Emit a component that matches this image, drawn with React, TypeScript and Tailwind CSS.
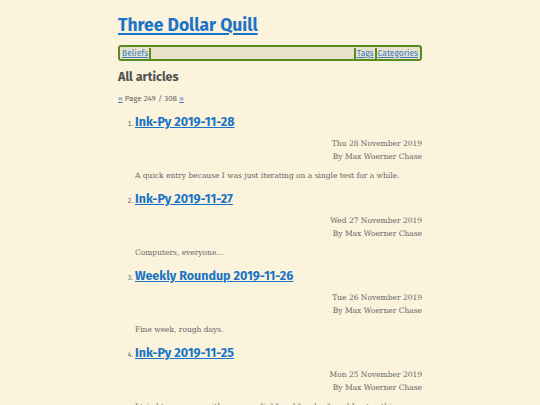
import React from 'react'

const posts = [
  { title: 'Ink-Py 2019-11-28', date: 'Thu 28 November 2019', excerpt: 'A quick entry because I was just iterating on a single test for a while.' },
  { title: 'Ink-Py 2019-11-27', date: 'Wed 27 November 2019', excerpt: 'Computers, everyone...' },
  { title: 'Weekly Roundup 2019-11-26', date: 'Tue 26 November 2019', excerpt: 'Fine week, rough days.' },
  { title: 'Ink-Py 2019-11-25', date: 'Mon 25 November 2019', excerpt: 'I tried to come up with a pun on "ink" and "snakes", and I got nothing.' },
]

const sans = "font-['Fira_Sans','Lato','Open_Sans',sans-serif]"
const serif = "font-['DejaVu_Serif',serif]"

export default function App() {
  return (
    <div className="min-h-[405px] bg-[#fbf3dc] text-[#555]">
      <div className="mx-auto w-[304px] pt-[15px]">
        {/* header */}
        <h1 className={`${sans} text-[17.5px] leading-[21px] font-bold`}>
          <a href="#" className="text-[#1a73c7] underline decoration-2 underline-offset-2">Three Dollar Quill</a>
        </h1>

        {/* nav */}
        <nav className={`${sans} mt-[9px] flex h-[16px] items-center rounded-[3px] border-2 border-[#5b8c1e] bg-[#e9e3cd] px-[2px] text-[8.5px]`}>
          <a href="#" className="text-[#3b7bc4] underline">Beliefs</a>
          <span className="ml-[1px] h-[11px] w-[2px] bg-[#5b8c1e]" />
          <span className="flex-1" />
          <span className="mr-[1px] h-[11px] w-[2px] bg-[#5b8c1e]" />
          <a href="#" className="text-[#3b7bc4] underline">Tags</a>
          <span className="mx-[1px] h-[11px] w-[2px] bg-[#5b8c1e]" />
          <a href="#" className="text-[#3b7bc4] underline">Categories</a>
        </nav>

        <h2 className={`${sans} mt-[8px] text-[12.5px] leading-[16px] font-bold text-[#4f5052]`}>All articles</h2>

        <p className={`${sans} mt-[9px] text-[8px] leading-[10px] text-[#666]`}>
          <a href="#" className="text-[#3b7bc4] underline">«</a> Page 249 / 308{' '}
          <a href="#" className="text-[#3b7bc4] underline">»</a>
        </p>

        <ol className="mt-[10px] list-decimal pl-[17px]">
          {posts.map((p) => (
            <li key={p.title} className={`${sans} text-[7px] text-[#666] marker:text-[7px]`}>
              <a href="#" className={`${sans} text-[12.5px] leading-[16px] font-bold text-[#1a73c7] underline`}>{p.title}</a>
              <div className={`${serif} mt-[8px] text-right text-[7.5px] leading-[12.5px] text-[#666]`}>
                <div>{p.date}</div>
                <div>By Max Woerner Chase</div>
              </div>
              <p className={`${serif} mt-[7px] mb-[8.5px] text-[7.5px] leading-[12.5px] text-[#666]`}>{p.excerpt}</p>
            </li>
          ))}
        </ol>
      </div>
    </div>
  )
}
